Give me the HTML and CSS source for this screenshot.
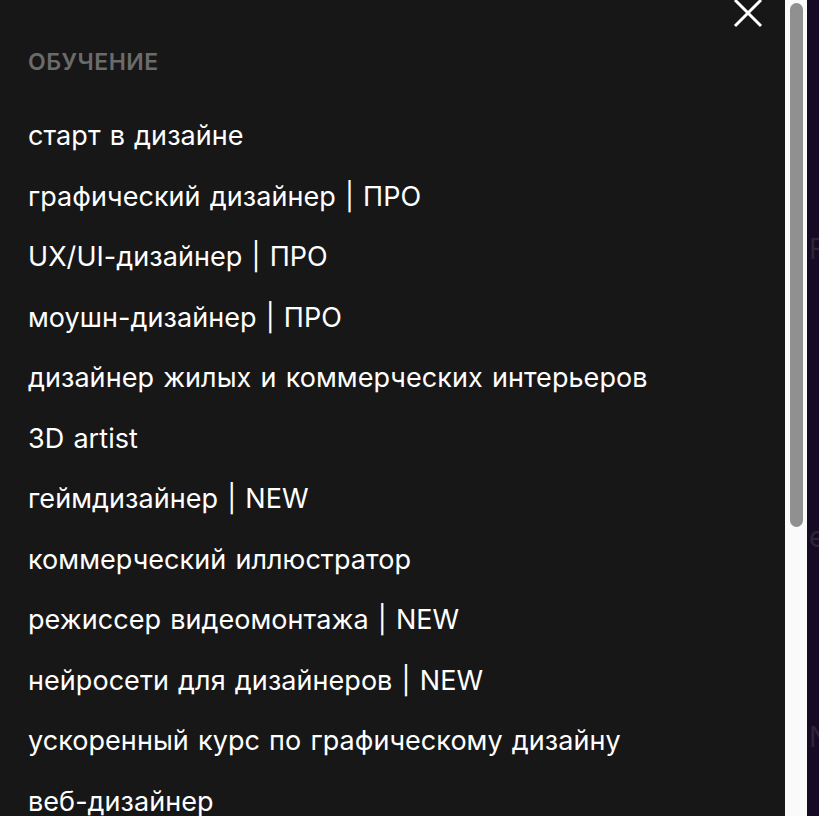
FILE: index.html
```html
<!DOCTYPE html>
<html lang="ru">
<head>
<meta charset="utf-8">
<title>Меню</title>
<link rel="stylesheet" href="styles.css">
</head>
<body>
<div class="layout">
  <nav class="panel">
    <button class="close" aria-label="Закрыть">
      <svg width="30" height="30" viewBox="0 0 30 30"><path d="M2 0 L28 26 M28 0 L2 26" stroke="#ffffff" stroke-width="3" fill="none"/></svg>
    </button>
    <h2 class="heading">ОБУЧЕНИЕ</h2>
    <ul class="menu">
      <li>старт в дизайне</li>
      <li>графический дизайнер | ПРО</li>
      <li>UX/UI-дизайнер | ПРО</li>
      <li>моушн-дизайнер | ПРО</li>
      <li>дизайнер жилых и коммерческих интерьеров</li>
      <li>3D artist</li>
      <li>геймдизайнер | NEW</li>
      <li>коммерческий иллюстратор</li>
      <li>режиссер видеомонтажа | NEW</li>
      <li>нейросети для дизайнеров | NEW</li>
      <li>ускоренный курс по графическому дизайну</li>
      <li>веб-дизайнер</li>
      <li>дизайнер презентаций</li>
    </ul>
  </nav>
  <div class="scrollbar"><div class="thumb"></div></div>
  <div class="backdrop">
    <span class="ghost g1">F</span>
    <span class="ghost g2">е</span>
    <span class="ghost g3">N</span>
  </div>
</div>
</body>
</html>
```
FILE: styles.css
```css
html, body {
  margin: 0;
  padding: 0;
  height: 100%;
  overflow: hidden;
  background: #170a24;
}
.layout {
  display: flex;
  height: 816px;
}
.panel {
  position: relative;
  width: 785px;
  flex: none;
  background: #171717;
  padding: 0 0 0 28px;
  box-sizing: border-box;
  overflow: hidden;
  font-family: Inter, "Noto Sans", sans-serif;
  color: #ffffff;
}
.close {
  position: absolute;
  top: 0;
  left: 733px;
  width: 30px;
  height: 30px;
  padding: 0;
  border: 0;
  background: none;
}
.close svg { display: block; }
.heading {
  margin: 48px 0 0 0;
  font-size: 23px;
  line-height: 28px;
  font-weight: 600;
  letter-spacing: 0.5px;
  color: #6b6b6b;
}
.menu {
  list-style: none;
  margin: 45px 0 0 0;
  padding: 0;
}
.menu li {
  font-size: 27px;
  line-height: 30px;
  height: 30px;
  margin-bottom: 30.5px;
  letter-spacing: 0.05px;
  word-spacing: 1.5px;
  white-space: nowrap;
}
.scrollbar {
  width: 22px;
  flex: none;
  background: #fafafa;
  box-sizing: border-box;
  padding: 3px 4px 0 5px;
}
.thumb {
  height: 524px;
  background: #909090;
  border-radius: 7px;
}
.backdrop {
  flex: 1;
  position: relative;
  overflow: hidden;
  font-family: Inter, sans-serif;
  color: #2c2536;
}
.ghost {
  position: absolute;
  left: 2px;
  font-size: 28px;
}
.g1 { top: 232px; }
.g2 { top: 520px; }
.g3 { top: 720px; }
```
